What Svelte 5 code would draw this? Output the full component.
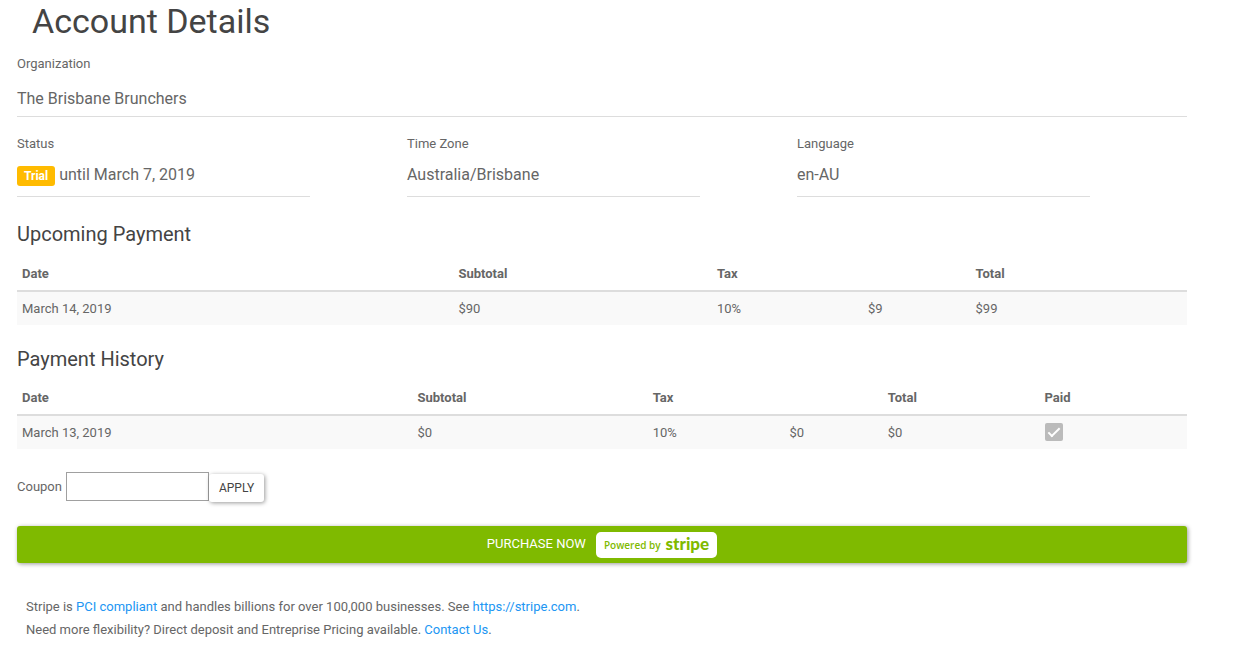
<script>
  const details = [
    { label: 'Status', value: 'until March 7, 2019', badge: 'Trial' },
    { label: 'Time Zone', value: 'Australia/Brisbane' },
    { label: 'Language', value: 'en-AU' }
  ];
  const upcoming = [
    { date: 'March 14, 2019', subtotal: '$90', rate: '10%', tax: '$9', total: '$99' }
  ];
  const history = [
    { date: 'March 13, 2019', subtotal: '$0', rate: '10%', tax: '$0', total: '$0', paid: true }
  ];
  let coupon = $state('');
</script>

<main>
  <h1>Account Details</h1>

  <dl class="organization">
    <dt>Organization</dt>
    <dd>The Brisbane Brunchers</dd>
  </dl>

  <dl class="details">
    {#each details as item}
      <div>
        <dt>{item.label}</dt>
        <dd>
          {#if item.badge}<span class="badge">{item.badge}</span>{/if}
          {item.value}
        </dd>
      </div>
    {/each}
  </dl>

  <section class="upcoming">
    <h2>Upcoming Payment</h2>
    <table>
      <colgroup>
        <col style="width: 37.3%" /><col style="width: 22.1%" /><col style="width: 12.9%" />
        <col style="width: 9.2%" /><col style="width: 18.5%" />
      </colgroup>
      <thead>
        <tr><th>Date</th><th>Subtotal</th><th colspan="2">Tax</th><th>Total</th></tr>
      </thead>
      <tbody>
        {#each upcoming as row}
          <tr>
            <td>{row.date}</td><td>{row.subtotal}</td><td>{row.rate}</td><td>{row.tax}</td><td>{row.total}</td>
          </tr>
        {/each}
      </tbody>
    </table>
  </section>

  <section class="history">
    <h2>Payment History</h2>
    <table>
      <colgroup>
        <col style="width: 33.8%" /><col style="width: 20.1%" /><col style="width: 11.7%" />
        <col style="width: 8.4%" /><col style="width: 13.4%" /><col style="width: 12.6%" />
      </colgroup>
      <thead>
        <tr><th>Date</th><th>Subtotal</th><th colspan="2">Tax</th><th>Total</th><th>Paid</th></tr>
      </thead>
      <tbody>
        {#each history as row}
          <tr>
            <td>{row.date}</td><td>{row.subtotal}</td><td>{row.rate}</td><td>{row.tax}</td><td>{row.total}</td>
            <td class="paid"><input type="checkbox" aria-label="Paid" checked={row.paid} disabled /></td>
          </tr>
        {/each}
      </tbody>
    </table>
  </section>

  <form onsubmit={(e) => e.preventDefault()}>
    <label for="coupon">Coupon</label>
    <input id="coupon" type="text" bind:value={coupon} />
    <button class="apply" type="submit">APPLY</button>
  </form>

  <button class="purchase" type="button">
    PURCHASE NOW
    <span class="powered">Powered by <strong>stripe</strong></span>
  </button>

  <footer>
    <p>Stripe is <a href="#pci">PCI compliant</a> and handles billions for over 100,000 businesses. See <a href="https://stripe.com">https://stripe.com</a>.</p>
    <p>Need more flexibility? Direct deposit and Entreprise Pricing available. <a href="#contact">Contact Us</a>.</p>
  </footer>
</main>

<style>
  :global(body) {
    margin: 0;
    background: #fff;
  }
  main {
    padding: 0 68px 12px 17px;
    font: 13px/23px Roboto, sans-serif;
    color: #666;
  }
  h1,
  h2 {
    margin: 0;
    font-weight: 400;
    color: #444;
  }
  h1 {
    padding-left: 15px;
    font-size: 34px;
    line-height: 42px;
  }
  h2 {
    margin-bottom: 10px;
    font-size: 20px;
    line-height: 24px;
  }
  dl,
  dd,
  p {
    margin: 0;
  }
  dt {
    line-height: 24px;
  }
  dd {
    margin-top: 5px;
    border-bottom: 1px solid #ddd;
    font-size: 16px;
    line-height: 28px;
    padding-bottom: 7px;
  }
  .organization {
    margin-top: 10px;
  }
  .organization dd {
    padding: 4px 0 3px;
  }
  .details {
    display: grid;
    grid-template-columns: repeat(3, 1fr);
    margin-top: 15px;
  }
  .details dd {
    width: 75%;
  }
  .badge {
    display: inline-block;
    padding: 0 7px;
    border-radius: 3px;
    background: #fb0;
    color: #fff;
    font-size: 12px;
    font-weight: 700;
    line-height: 20px;
  }
  .upcoming {
    margin-top: 25px;
  }
  .upcoming h2 {
    margin-bottom: 11px;
  }
  .history {
    margin-top: 22px;
  }
  table {
    width: 100%;
    table-layout: fixed;
    border-collapse: separate;
    border-spacing: 0;
  }
  th,
  td {
    padding: 5px;
    text-align: left;
  }
  th {
    border-bottom: 2px solid #ddd;
    font-weight: 700;
  }
  td {
    background: #f9f9f9;
  }
  .paid {
    padding: 0 5px;
    vertical-align: top;
  }
  .paid input {
    appearance: none;
    display: block;
    width: 18px;
    height: 18px;
    margin: 7px 0 0;
    border-radius: 2px;
    background: #bbb;
    overflow: hidden;
  }
  .paid input:checked::after {
    content: '';
    display: block;
    width: 4px;
    height: 10px;
    margin: 2px 0 0 6px;
    border: solid #fff;
    border-width: 0 2px 2px 0;
    transform: rotate(45deg);
  }
  form {
    display: flex;
    align-items: flex-start;
    margin-top: 23px;
  }
  form label {
    line-height: 29px;
    margin-right: 4px;
  }
  form input {
    box-sizing: border-box;
    width: 143px;
    height: 29px;
    padding: 2px 4px;
    border: 1px solid #a0a0a0;
    font: inherit;
    color: inherit;
  }
  button {
    border: 0;
    border-radius: 3px;
    box-shadow: 1px 1px 4px rgba(0, 0, 0, 0.4);
    cursor: pointer;
  }
  .apply {
    margin-top: 2px;
    padding: 3px 10px;
    background: #fff;
    color: #444;
    font: 12px/22px Roboto, sans-serif;
  }
  .purchase {
    display: flex;
    align-items: center;
    justify-content: center;
    gap: 10px;
    width: 100%;
    height: 37px;
    margin-top: 24px;
    padding: 0 16px 2px;
    background: #7fba00;
    color: #fff;
    font: 13px/23px Roboto, sans-serif;
  }
  .powered {
    display: flex;
    align-items: center;
    gap: 5px;
    height: 26px;
    margin-top: 2px;
    padding: 0 8px;
    border-radius: 5px;
    background: #fff;
    color: #7fba00;
    font: 600 10px/26px "Open Sans", sans-serif;
  }
  .powered strong {
    padding-bottom: 2px;
    font: 900 17px/24px Lato, sans-serif;
  }
  footer {
    margin-top: 32px;
    padding-left: 9px;
  }
  a {
    color: #2196f3;
    text-decoration: none;
  }
</style>
